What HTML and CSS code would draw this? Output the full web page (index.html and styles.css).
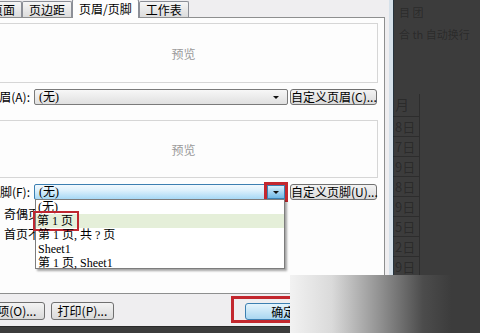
FILE: index.html
```html
<!DOCTYPE html>
<html lang="zh-CN">
<head>
<meta charset="UTF-8">
<meta name="viewport" content="width=device-width, initial-scale=1.0">
<title>页面设置</title>
<link rel="stylesheet" href="styles.css">
</head>
<body>

<div class="screen">
  <div class="dialog">
    <div class="tabs">
      <span class="tab">页面</span>
      <span class="tab">页边距</span>
      <span class="tab active">页眉/页脚</span>
      <span class="tab">工作表</span>
    </div>

    <div class="panel">
      <div class="preview">预览</div>
      <div class="row">
        <span class="label">页眉(A):</span>
        <div class="select">
          <span class="value">(无)</span>
          <span class="arrow"></span>
        </div>
        <button class="btn wide">自定义页眉(C)...</button>
      </div>

      <div class="preview lower">预览</div>
      <div class="row">
        <span class="label">页脚(F):</span>
        <div class="select hot">
          <span class="value">(无)</span>
          <span class="arrow marked"></span>
          <ul class="list">
            <li>(无)</li>
            <li class="picked"><span class="mark">第 1 页</span></li>
            <li>第 1 页, 共 ? 页</li>
            <li>Sheet1</li>
            <li>第 1 页, Sheet1</li>
          </ul>
        </div>
        <button class="btn wide">自定义页脚(U)...</button>
      </div>

      <label class="check first"><span class="box"></span>奇偶页不同(D)</label>
      <label class="check"><span class="box"></span>首页不同(I)</label>
    </div>

    <div class="actions">
      <button class="btn option">选项(O)...</button>
      <button class="btn print">打印(P)...</button>
      <span class="okFrame"><button class="btn ok">确定</button></span>
      <button class="btn cancel">取消</button>
    </div>
  </div>

  <div class="desk">
    <div class="ribbon">
      <span>目 团</span>
      <span>合 th 自动换行</span>
    </div>
    <div class="sheet">
      <div class="cell head">月</div>
      <div class="cell">8日</div>
      <div class="cell">7日</div>
      <div class="cell">9日</div>
      <div class="cell">8日</div>
      <div class="cell">9日</div>
      <div class="cell">5日</div>
      <div class="cell">2日</div>
      <div class="cell">9日</div>
    </div>
  </div>

  <div class="fade"></div>
</div>

</body>
</html>
```

FILE: styles.css
```css
body {
  margin: 0;
  font-family: "Noto Sans CJK SC", "Liberation Sans", sans-serif;
  font-size: 12px;
  color: #000;
}
.screen {
  width: 480px;
  height: 333px;
  display: flex;
  align-items: flex-start;
  background-color: #3c3c3c;
  overflow: hidden;
  position: relative;
}

/* dialog */
.dialog {
  width: 443px;
  height: 326px;
  margin-left: -50px;
  flex: none;
  box-sizing: border-box;
  display: flex;
  flex-direction: column;
  background-color: #efeef0;
  border-right: 4px solid #d6e1ea;
  box-shadow: 1px 0 0 #26343e, 0 1px 0 #2a2a2a;
}
.tabs {
  height: 17px;
  display: flex;
  align-items: flex-end;
  padding-left: 34px;
}
.tab {
  height: 15px;
  line-height: 15px;
  padding: 0 6px;
  border: 1px solid #8c8f97;
  border-bottom: none;
  border-radius: 2px 2px 0 0;
  background: linear-gradient(#f6f6f6, #dcdcdc);
  white-space: nowrap;
}
.tab.active {
  height: 18px;
  line-height: 17px;
  margin-bottom: -1px;
  background: #fdfdfd;
  position: relative;
  z-index: 1;
}
.panel {
  height: 277px;
  margin: 0 4px 0 8px;
  padding: 5px 6px 0 30px;
  box-sizing: border-box;
  background-color: #fdfdfd;
  border: 1px solid #8e8f8f;
  display: flex;
  flex-direction: column;
}
.preview {
  height: 60px;
  box-sizing: border-box;
  border: 1px solid #d6d6d6;
  display: flex;
  align-items: center;
  justify-content: center;
  color: #9a9a9a;
}
.preview.lower {
  height: 58px;
  margin-top: 15px;
}
.row {
  height: 16px;
  margin-top: 6px;
  display: flex;
  align-items: stretch;
}
.label {
  width: 41px;
  flex: none;
  display: flex;
  align-items: center;
  justify-content: flex-end;
  white-space: nowrap;
  margin-right: 4px;
  line-height: 16px;
}

/* combo boxes */
.select {
  width: 254px;
  flex: none;
  position: relative;
  box-sizing: border-box;
  border: 1px solid #7a7a7a;
  border-radius: 2px;
  background: linear-gradient(#f7f7f7, #e0e0e0);
  display: flex;
  align-items: center;
  justify-content: space-between;
  font-family: "Liberation Serif", "Noto Sans CJK SC", serif;
}
.value {
  padding-left: 4px;
  line-height: 14px;
}
.arrow {
  width: 18px;
  height: 14px;
  margin-right: 2px;
  display: flex;
  align-items: center;
  justify-content: center;
  box-sizing: border-box;
}
.arrow::after {
  content: "";
  border-left: 3px solid transparent;
  border-right: 3px solid transparent;
  border-top: 3px solid #111;
}
.select.hot {
  border-color: #3c7fb1;
  background: linear-gradient(#f2f9fe 0%, #dcf0fc 40%, #a6d8f5 100%);
}
.arrow.marked {
  border: 1px solid #3c7fb1;
  background: linear-gradient(#d9f0fc, #70b8e6);
  outline: 3px solid #c3272e;
}
.list {
  position: absolute;
  top: 14px;
  left: 0;
  width: 250px;
  height: 70px;
  margin: 0;
  padding: 0;
  list-style: none;
  box-sizing: border-box;
  background-color: #fff;
  border: 1px solid #7d7d7d;
  box-shadow: 2px 2px 2px rgba(0, 0, 0, 0.35);
  z-index: 2;
}
.list li {
  height: 14px;
  line-height: 14px;
  padding-left: 2px;
  white-space: nowrap;
}
.list li.picked {
  background-color: #e5efd9;
}
.mark {
  display: inline-block;
  padding: 0 3px 0 1px;
  margin-left: -2px;
  line-height: 14px;
  outline: 2px solid #bf2730;
  outline-offset: 1px;
}

/* check rows */
.check {
  height: 14px;
  line-height: 14px;
  display: flex;
  align-items: center;
  white-space: nowrap;
  margin-top: 6px;
}
.check.first {
  margin-top: 7px;
}
.box {
  width: 11px;
  height: 11px;
  margin-left: -4px;
  margin-right: 6px;
  border: 1px solid #8f8f8f;
  background-color: #f4f4f4;
}

/* buttons */
.btn {
  height: 16px;
  padding: 0;
  font: inherit;
  font-size: 12px;
  line-height: 14px;
  color: #000;
  border: 1px solid #707070;
  border-radius: 3px;
  background: linear-gradient(#f3f3f3, #dadada);
  white-space: nowrap;
}
.btn.wide {
  width: 87px;
  margin-left: 2px;
}
.actions {
  flex: 1;
  display: flex;
  align-items: flex-start;
  padding-left: 27px;
}
.option,
.print {
  height: 18px;
  margin-top: 8px;
}
.option {
  width: 70px;
}
.print {
  width: 66px;
  margin-left: 6px;
}
.okFrame {
  margin-top: 2px;
  margin-left: 117px;
  padding: 4px 3px 0 11px;
  border: 3px solid #c3272e;
  display: flex;
}
.ok {
  width: 66px;
  height: 17px;
  padding-left: 10px;
  border-color: #3c7fb1;
  background: linear-gradient(#e5f4fc, #a9d6f1);
}
.cancel {
  width: 66px;
  height: 18px;
  margin-top: 8px;
  margin-left: 8px;
}

/* worksheet behind the dialog */
.desk {
  flex: 1;
  height: 100%;
  font-size: 11px;
  color: rgba(0, 0, 0, 0.3);
}
.ribbon {
  height: 90px;
  display: flex;
  flex-direction: column;
  gap: 6px;
  padding: 4px 0 0 6px;
}
.sheet {
  width: 26px;
  border-right: 1px solid rgba(0, 0, 0, 0.25);
}
.cell {
  height: 20px;
  line-height: 20px;
  border-bottom: 1px solid rgba(0, 0, 0, 0.25);
  padding-left: 2px;
  box-sizing: border-box;
  font-size: 13px;
}
.cell.head {
  height: 23px;
  font-size: 14px;
}

/* bottom-right fade of the photo */
.fade {
  position: absolute;
  left: 290px;
  top: 275px;
  right: 0;
  bottom: 0;
  background: linear-gradient(to right, #f2f2f2 0%, #dadada 22%, #8f8f8f 48%, #4c4c4c 70%, #3c3c3c 85%);
  z-index: 3;
}
```
